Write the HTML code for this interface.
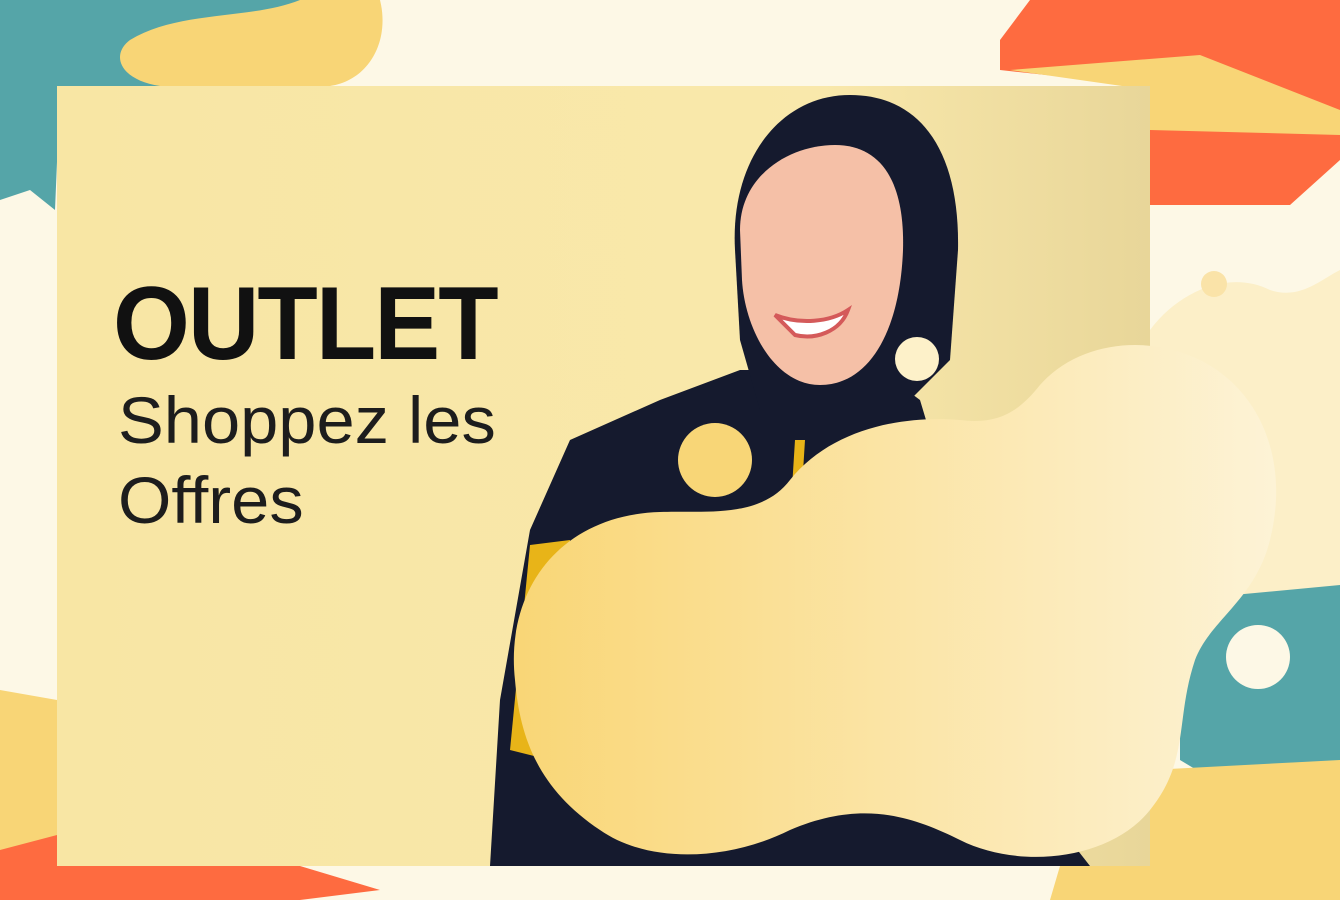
<!DOCTYPE html>
<html><head><meta charset="utf-8"><style>
html,body{margin:0;padding:0;width:1340px;height:900px;overflow:hidden;background:#fdf8e6}
svg{position:absolute;left:0;top:0}
.t{position:absolute;font-family:"Liberation Sans",sans-serif;color:#111;transform-origin:0 0;white-space:nowrap}
</style></head><body>
<svg width="1340" height="900" viewBox="0 0 1340 900">
<defs>
<linearGradient id="bl" x1="0" x2="1" y1="0" y2="0"><stop offset="0" stop-color="#f9d676"/><stop offset="1" stop-color="#fdf3d6"/></linearGradient>
<linearGradient id="bg2" x1="0" x2="1"><stop offset="0" stop-color="#f8e6a4"/><stop offset="0.7" stop-color="#f9e8ab"/><stop offset="1" stop-color="#e8d699"/></linearGradient>
</defs>
<path d="M0 0 H330 L320 90 L60 90 L55 210 L30 190 L0 200 Z" fill="#55a5a8"/>
<path d="M130 40 C180 10 250 20 300 0 L380 0 C390 40 370 80 330 86 L160 86 C120 80 110 55 130 40Z" fill="#f8d576"/>
<path d="M1030 0 H1340 V160 L1290 205 L1150 205 L1150 86 L1000 70 L1000 40 Z" fill="#fe6b40"/>
<path d="M1010 70 L1200 55 L1340 110 L1340 135 L1150 130 L1150 90 Z" fill="#f8d576"/>
<path d="M1150 330 C1180 290 1230 270 1270 290 C1300 300 1320 280 1340 270 V600 L1270 605 L1150 600Z" fill="#fcefc8"/>
<circle cx="1214" cy="284" r="13" fill="#fae3a8"/>
<path d="M1180 600 L1340 585 V760 L1300 800 L1230 790 L1180 760 Z" fill="#55a5a8"/>
<circle cx="1258" cy="657" r="32" fill="#fdf8e6"/>
<path d="M1100 860 L1150 780 L1200 860 L1190 900 L1100 900Z" fill="#55a5a8"/>
<path d="M1150 770 L1340 760 V900 H1050 L1060 866 L1150 866Z" fill="#f8d576"/>
<path d="M0 690 L57 700 L57 866 L0 866Z" fill="#f8d576"/>
<path d="M0 850 L57 835 L57 866 L300 866 L380 890 L300 900 H0Z" fill="#fe6b40"/>
<rect x="57" y="86" width="1093" height="780" fill="url(#bg2)"/>
<path d="M490 866 L500 700 L530 530 L570 440 L660 400 L740 370 L880 370 L920 400 L950 500 L960 700 L1090 866Z" fill="#151a2e"/>
<path d="M735 250 C730 160 780 95 850 95 C920 95 960 150 958 250 L950 360 L900 410 L760 410 L740 340Z" fill="#151a2e"/>
<path d="M740 230 C740 175 790 145 835 145 C880 145 905 180 903 250 C900 330 870 385 820 385 C775 385 745 330 742 280Z" fill="#f5c0a7"/>
<path d="M775 315 C800 325 830 322 848 310 C840 332 815 340 795 335 Z" fill="#fff" stroke="#d45a5a" stroke-width="4"/>
<path d="M530 545 L570 540 L550 760 L510 750Z" fill="#e8b418"/>
<path d="M795 440 L805 440 L800 520 L790 520Z" fill="#e8b418"/>
<path d="M515 680 C505 590 560 515 660 512 C700 510 760 520 790 480 C830 430 900 415 960 420 C1000 425 1020 410 1040 385 C1080 340 1150 335 1200 360 C1260 390 1290 460 1270 540 C1255 600 1210 620 1195 660 C1175 720 1190 760 1150 810 C1110 860 1020 870 960 840 C910 815 860 800 790 830 C730 860 650 865 600 830 C540 790 520 740 515 680Z" fill="url(#bl)"/>
<circle cx="715" cy="460" r="37" fill="#f8d677"/>
<circle cx="917" cy="359" r="22" fill="#fdf1c9"/>
</svg>
<div class="t" style="left:113px;top:272px;font-size:104px;font-weight:900;letter-spacing:-2px;line-height:1;transform:scaleX(0.95)">OUTLET</div>
<div class="t" style="left:118px;top:380px;font-size:66px;line-height:80px;color:#1d1d1d;transform:scaleX(1.04)">Shoppez les<br>Offres</div>
</body></html>
